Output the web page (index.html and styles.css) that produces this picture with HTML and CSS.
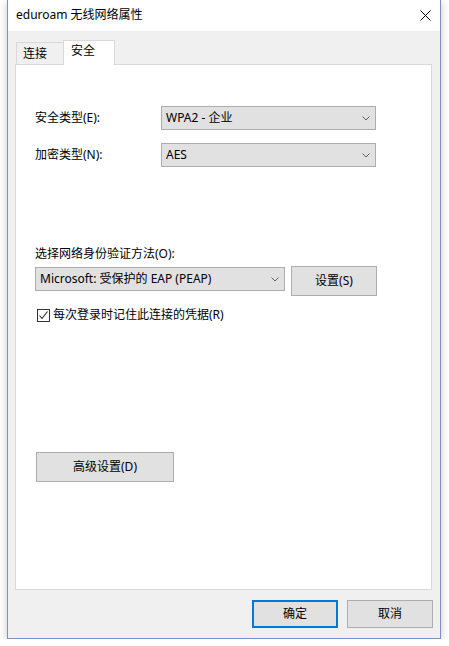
FILE: index.html
```html
<!DOCTYPE html>
<html lang="zh-CN">
<head>
<meta charset="utf-8">
<title>eduroam 无线网络属性</title>
<link rel="stylesheet" href="styles.css">
</head>
<body>
<div class="window">
  <div class="titlebar">
    <span class="title">eduroam 无线网络属性</span>
    <svg class="close" width="11" height="11" viewBox="0 0 11 11"><path d="M0.5 0.5 L10.5 10.5 M10.5 0.5 L0.5 10.5" stroke="#000" stroke-width="1" fill="none"/></svg>
  </div>
  <div class="body">
    <div class="tabs">
      <div class="tab">连接</div>
      <div class="tab active">安全</div>
    </div>
    <div class="panel">
      <div class="row first">
        <span class="label">安全类型(E):</span>
        <div class="select wide"><span>WPA2 - 企业</span><svg class="chev" width="8" height="5" viewBox="0 0 8 5"><path d="M0.5 0.5 L4 4 L7.5 0.5" stroke="#606060" fill="none"/></svg></div>
      </div>
      <div class="row second">
        <span class="label">加密类型(N):</span>
        <div class="select wide"><span>AES</span><svg class="chev" width="8" height="5" viewBox="0 0 8 5"><path d="M0.5 0.5 L4 4 L7.5 0.5" stroke="#606060" fill="none"/></svg></div>
      </div>
      <div class="auth-label">选择网络身份验证方法(O):</div>
      <div class="auth-row">
        <div class="select auth"><span>Microsoft: 受保护的 EAP (PEAP)</span><svg class="chev" width="8" height="5" viewBox="0 0 8 5"><path d="M0.5 0.5 L4 4 L7.5 0.5" stroke="#606060" fill="none"/></svg></div>
        <div class="btn settings">设置(S)</div>
      </div>
      <div class="check-row">
        <span class="checkbox"><svg width="11" height="11" viewBox="0 0 11 11"><path d="M1.5 5.5 L4 8.5 L9.5 1.5" stroke="#222" stroke-width="1.1" fill="none"/></svg></span>
        <span>每次登录时记住此连接的凭据(R)</span>
      </div>
      <div class="btn advanced">高级设置(D)</div>
    </div>
    <div class="footer">
      <div class="btn default">确定</div>
      <div class="btn">取消</div>
    </div>
  </div>
</div>
</body>
</html>
```

FILE: styles.css
```css
html, body {
  margin: 0;
  padding: 0;
  background: #ffffff;
}
body {
  font-family: "Noto Sans", "Noto Sans CJK SC", sans-serif;
  font-size: 12px;
  color: #000;
}
.window {
  margin: -1px 0 0 7px;
  width: 434px;
  height: 640px;
  box-sizing: border-box;
  border: 1px solid #7d90c8;
  background: #f0f0f0;
  box-shadow: 0 2px 8px rgba(0, 0, 0, 0.22);
  display: flex;
  flex-direction: column;
}
.titlebar {
  height: 31px;
  flex: none;
  background: #fff;
  display: flex;
  align-items: center;
  justify-content: space-between;
  padding: 0 9px 0 8px;
  box-sizing: border-box;
}
.title {
  font-size: 12px;
  line-height: 16px;
  margin-top: -1px;
}
.close {
  margin-top: -1px;
}
.body {
  padding: 9px 7px 0 7px;
  flex: 1;
  display: flex;
  flex-direction: column;
}
.tabs {
  display: flex;
  align-items: flex-end;
  height: 24px;
  margin-left: 1px;
}
.tab {
  height: 22px;
  box-sizing: border-box;
  border: 1px solid #d9d9d9;
  border-bottom: none;
  border-right: none;
  width: 47px;
  padding: 3px 0 0 6px;
  line-height: 16px;
  background: #f0f0f0;
}
.tab.active {
  height: 25px;
  margin-bottom: -1px;
  width: 52px;
  border-right: 1px solid #d9d9d9;
  background: #fff;
  padding: 2px 0 0 7px;
  position: relative;
  z-index: 1;
}
.panel {
  width: 417px;
  height: 526px;
  box-sizing: border-box;
  border: 1px solid #d9d9d9;
  background: #fff;
  padding: 0 0 0 19px;
}
.row {
  display: flex;
  align-items: center;
}
.row.first {
  margin-top: 41px;
}
.row.second {
  margin-top: 13px;
}
.label {
  width: 126px;
  line-height: 16px;
}
.select {
  height: 24px;
  box-sizing: border-box;
  border: 1px solid #adadad;
  background: #e1e1e1;
  display: flex;
  align-items: center;
  justify-content: space-between;
  padding: 0 5px 0 4px;
  line-height: 16px;
}
.select.wide {
  width: 215px;
}
.select.auth {
  width: 250px;
  margin-top: 1px;
}
.chev {
  margin-top: 1px;
}
.auth-label {
  margin-top: 79px;
  line-height: 16px;
}
.auth-row {
  display: flex;
  align-items: flex-start;
  margin-top: 4px;
}
.btn {
  box-sizing: border-box;
  border: 1px solid #adadad;
  background: #e1e1e1;
  display: flex;
  align-items: center;
  justify-content: center;
  line-height: 16px;
}
.btn.settings {
  width: 86px;
  height: 30px;
  margin-left: 6px;
}
.check-row {
  display: flex;
  align-items: center;
  margin-top: 11px;
  margin-left: 2px;
  line-height: 16px;
}
.checkbox {
  width: 13px;
  height: 13px;
  box-sizing: border-box;
  border: 1px solid #333;
  background: #fff;
  display: flex;
  align-items: center;
  justify-content: center;
  margin-right: 3px;
}
.btn.advanced {
  width: 138px;
  height: 30px;
  margin-top: 129px;
  margin-left: 1px;
}
.footer {
  display: flex;
  justify-content: flex-end;
  gap: 9px;
  margin-top: 10px;
  padding-right: 0;
}
.footer .btn {
  width: 86px;
  height: 28px;
}
.footer .btn.default {
  border: 2px solid #0078d7;
}
```
